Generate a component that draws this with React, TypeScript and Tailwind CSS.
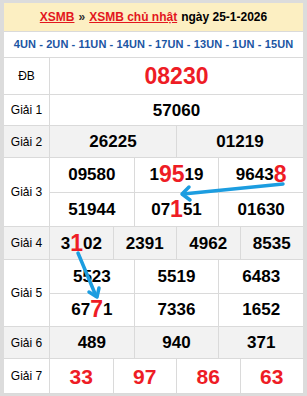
import type { ReactNode } from 'react';

// XSMB result table — Sunday 25-1-2026, with the "soi cầu" arrows drawn on top.

const FONT = "font-['Liberation_Sans',Arial,sans-serif]";

function Big({ children }: { children: ReactNode }) {
  return <span className="text-[23px] text-[#ee1c25]">{children}</span>;
}

function Cell({ children, last, red, size = 'text-[17px]' }: { children: ReactNode; last?: boolean; red?: boolean; size?: string }) {
  return (
    <div
      className={`flex-1 flex items-center justify-center font-bold leading-none ${size} ${red ? 'text-[#ee1c25]' : 'text-black'} ${last ? '' : 'border-r border-[#dadada]'}`}
    >
      {children}
    </div>
  );
}

function Row({ label, h, gray, children }: { label: string; h: string; gray?: boolean; children: ReactNode }) {
  return (
    <div className={`flex border-b border-[#dadada] ${h} ${gray ? 'bg-[#f2f2f2]' : 'bg-white'}`}>
      <div className="w-[46px] shrink-0 border-r border-[#dadada] flex items-center justify-center text-[12px] text-black">
        {label}
      </div>
      <div className="flex-1 flex flex-col">{children}</div>
    </div>
  );
}

function Line({ children, bottom }: { children: ReactNode; bottom?: boolean }) {
  return <div className={`flex flex-1 ${bottom ? 'border-b border-[#dadada]' : ''}`}>{children}</div>;
}

export default function App() {
  return (
    <div className={`relative w-[307px] h-[396px] bg-[#dcdcdc] pt-[3px] pl-[4px] pr-[4px] ${FONT}`}>
      <div className="bg-white">
        {/* Title */}
        <div className="h-[29px] bg-[#fcefc2] border-b border-[#dadada] flex items-center justify-center text-[12px] font-bold text-black">
          <span className="text-[#e3161d] underline">XSMB</span>
          <span className="mx-[4px] text-[#333]">»</span>
          <span className="text-[#e3161d] underline">XSMB chủ nhật</span>
          <span className="ml-[4px]">ngày 25-1-2026</span>
        </div>

        {/* Nav of prefixes */}
        <div className="h-[26px] border-b border-[#dadada] flex items-center justify-center text-[11px] font-bold text-[#1b55a3] tracking-[0.1px]">
          4UN - 2UN - 11UN - 14UN - 17UN - 13UN - 1UN - 15UN
        </div>

        <Row label="ĐB" h="h-[37px]">
          <Line>
            <Cell last red size="text-[23px]">08230</Cell>
          </Line>
        </Row>

        <Row label="Giải 1" h="h-[31px]">
          <Line>
            <Cell last>57060</Cell>
          </Line>
        </Row>

        <Row label="Giải 2" h="h-[32px]" gray>
          <Line>
            <Cell>26225</Cell>
            <Cell last>01219</Cell>
          </Line>
        </Row>

        <Row label="Giải 3" h="h-[69px]">
          <Line bottom>
            <Cell>09580</Cell>
            <Cell>
              1<Big>95</Big>19
            </Cell>
            <Cell last>
              9643<Big>8</Big>
            </Cell>
          </Line>
          <Line>
            <Cell>51944</Cell>
            <Cell>
              07<Big>1</Big>51
            </Cell>
            <Cell last>01630</Cell>
          </Line>
        </Row>

        <Row label="Giải 4" h="h-[33px]" gray>
          <Line>
            <Cell>
              3<Big>1</Big>02
            </Cell>
            <Cell>2391</Cell>
            <Cell>4962</Cell>
            <Cell last>8535</Cell>
          </Line>
        </Row>

        <Row label="Giải 5" h="h-[67px]">
          <Line bottom>
            <Cell>5523</Cell>
            <Cell>5519</Cell>
            <Cell last>6483</Cell>
          </Line>
          <Line>
            <Cell>
              67<Big>7</Big>1
            </Cell>
            <Cell>7336</Cell>
            <Cell last>1652</Cell>
          </Line>
        </Row>

        <Row label="Giải 6" h="h-[32px]" gray>
          <Line>
            <Cell>489</Cell>
            <Cell>940</Cell>
            <Cell last>371</Cell>
          </Line>
        </Row>

        <Row label="Giải 7" h="h-[35px]">
          <Line>
            <Cell red size="text-[21px]">33</Cell>
            <Cell red size="text-[21px]">97</Cell>
            <Cell red size="text-[21px]">86</Cell>
            <Cell last red size="text-[21px]">63</Cell>
          </Line>
        </Row>
      </div>

      {/* Arrows over the table */}
      <svg className="absolute left-0 top-0 pointer-events-none" width="307" height="396" viewBox="0 0 307 396">
        <g stroke="#1c9de0" strokeWidth="3.5" strokeLinecap="round" strokeLinejoin="round" fill="none">
          <line x1="283" y1="184" x2="183" y2="194" />
          <polyline points="189,187 182,194 190,200" />
          <line x1="78" y1="253" x2="96" y2="296" />
          <polyline points="89,292 97,297 99,288" />
        </g>
      </svg>
    </div>
  );
}
